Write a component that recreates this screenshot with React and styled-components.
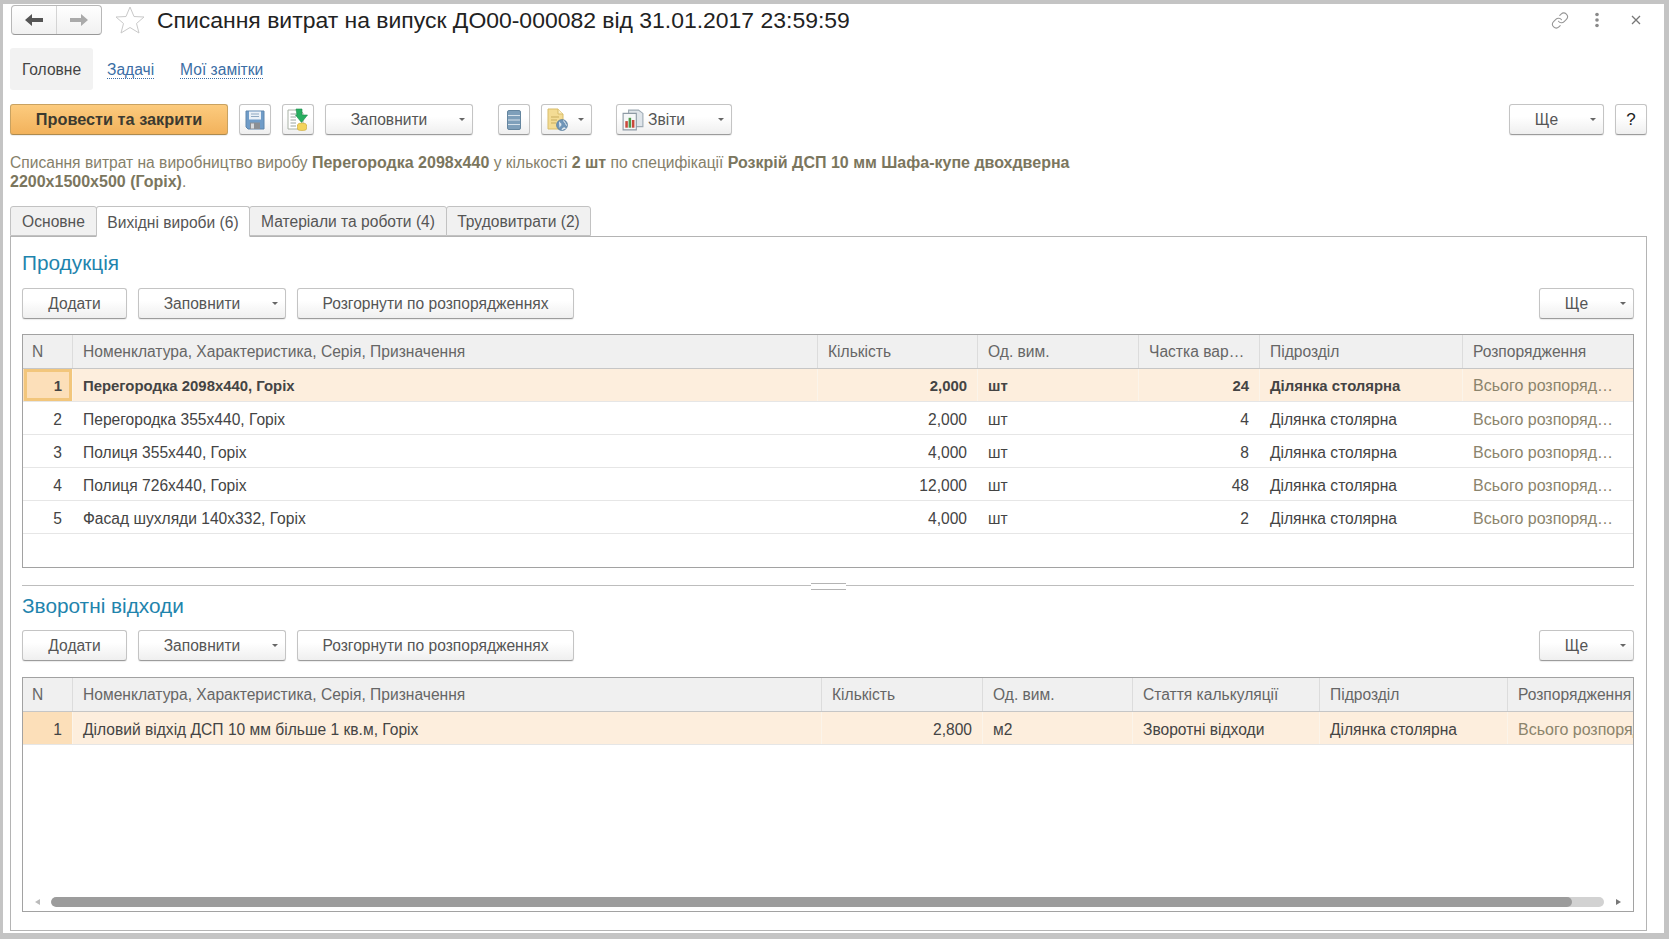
import React from "react";
import styled, { createGlobalStyle } from "styled-components";
import { Link } from "lucide-react";

const Global = createGlobalStyle`
  html, body { margin: 0; height: 100%; background: #c4c4c4; }
  #root { height: 100%; }
  * { box-sizing: border-box; }
  body { font-family: "Liberation Sans", Arial, sans-serif; font-size: 15.6px; color: #444; }
`;

const Page = styled.div`
  height: 939px;
  padding: 4px 5px 6px 3px;
`;

const Window = styled.div`
  height: 100%;
  background: #fff;
  padding: 1px 17px 2px 7px;
  display: flex;
  flex-direction: column;
`;

const Header = styled.header`
  display: flex;
  align-items: center;
  height: 30px;
`;

const NavGroup = styled.div`
  display: flex;
  margin-left: 1px;
  width: 91px;
  height: 30px;
  border: 1px solid #b8b8b8;
  border-bottom-color: #989898;
  border-radius: 4px;
  background: linear-gradient(#fff, #f1f1f1);
`;

const NavButton = styled.div`
  flex: 1;
  display: flex;
  align-items: center;
  justify-content: center;
  & + & { border-left: 1px solid #d4d4d4; }
`;

const Title = styled.h1`
  margin: 0 0 0 12px;
  font-size: 22.95px;
  font-weight: 400;
  color: #222;
  white-space: nowrap;
`;

const HeaderTools = styled.div`
  margin-left: auto;
  display: flex;
  align-items: center;
  color: #959595;
`;

const ToolSlot = styled.div`
  width: ${p => p.$w}px;
  display: flex;
  justify-content: center;
`;

const PageTabs = styled.nav`
  display: flex;
  align-items: center;
  height: 42px;
  margin-top: 13px;
`;

const PageTabActive = styled.div`
  width: 83px;
  height: 42px;
  padding-top: 2px;
  background: #f2f2f2;
  border-radius: 3px;
  display: flex;
  align-items: center;
  justify-content: center;
  color: #444;
`;

const PageLink = styled.a`
  margin: 2px 0 0 ${p => p.$ml}px;
  color: #3b6ea5;
  border-bottom: 1px dotted #3b6ea5;
  line-height: 17px;
`;

const Toolbar = styled.div`
  display: flex;
  align-items: center;
  gap: 11px;
  margin-top: ${p => p.$mt}px;
`;

const Button = styled.div`
  flex: none;
  display: flex;
  align-items: center;
  justify-content: center;
  width: ${p => p.$w}px;
  height: 31px;
  margin-left: ${p => p.$ml || 0}px;
  border: 1px solid #c4c4c4;
  border-bottom-color: #9c9c9c;
  border-radius: 3px;
  background: linear-gradient(#fff 40%, #efefef);
  box-shadow: 0 1px 1px rgba(0, 0, 0, 0.08);
  color: #555;
`;

const PrimaryButton = styled(Button)`
  border-color: #c9a261;
  border-bottom-color: #ad8a4f;
  background: linear-gradient(#fccb7e, #f2b25c);
  color: #3c3a30;
  font-size: 16.3px;
  font-weight: 700;
`;

const Label = styled.span`
  flex: 1;
  text-align: center;
`;

const HelpMark = styled.span`
  color: #222;
  font-size: 17px;
`;

const CaretBox = styled.span`
  flex: none;
  width: 20px;
  display: flex;
  justify-content: center;
  &::before {
    content: "";
    border-left: 3px solid transparent;
    border-right: 3px solid transparent;
    border-top: 3px solid #666;
  }
`;

const IconBox = styled.span`
  flex: none;
  display: flex;
  margin-left: ${p => p.$ml || 0}px;
`;

const Spacer = styled.div`
  flex: 1;
`;

const Description = styled.p`
  margin: 18px 0 0;
  line-height: 19px;
  font-size: 15.6px;
  color: #85806a;
  b { color: #7b765e; font-size: 16px; }
`;

const Tabs = styled.div`
  display: flex;
  margin-top: 15px;
  position: relative;
  z-index: 1;
`;

const Tab = styled.div`
  width: ${p => p.$w}px;
  height: ${p => p.$active ? 31 : 30}px;
  padding-top: 2px;
  display: flex;
  align-items: center;
  justify-content: center;
  margin-bottom: ${p => p.$active ? -1 : 0}px;
  margin-left: -1px;
  &:first-child { margin-left: 0; }
  border: 1px solid #c2c2c2;
  border-bottom-color: ${p => p.$active ? "#fff" : "#c2c2c2"};
  border-radius: 3px 3px 0 0;
  background: ${p => p.$active ? "#fff" : "#f1f1f1"};
  color: #555;
  position: relative;
  z-index: ${p => p.$active ? 1 : 0};
`;

const Panel = styled.section`
  flex: 1;
  border: 1px solid #b4b4b4;
  padding: 0 12px 18px 11px;
  display: flex;
  flex-direction: column;
  min-height: 0;
`;

const SectionTitle = styled.h2`
  margin: ${p => p.$mt}px 0 0;
  font-size: 20.8px;
  line-height: 24px;
  font-weight: 400;
  color: #1f84ad;
`;

const Grid = styled.div`
  margin-top: ${p => p.$mt}px;
  height: ${p => p.$h ? p.$h + "px" : "auto"};
  flex: ${p => p.$h ? "none" : 1};
  border: 1px solid #a2a2a2;
  display: flex;
  flex-direction: column;
  overflow: hidden;
`;

const GridRow = styled.div`
  display: grid;
  grid-template-columns: ${p => p.$cols};
  flex: none;
  height: ${p => p.$head ? 34 : 33}px;
  background: ${p => p.$head ? "#f0f0f0" : p.$selected ? "#fdeedd" : "#fff"};
  border-bottom: 1px solid ${p => p.$head ? "#c6c6c6" : "#e6e6e6"};
  color: ${p => p.$head ? "#666" : "#444"};
  font-weight: ${p => p.$bold ? 700 : 400};
  font-size: ${p => p.$bold ? 14.9 : 15.6}px;
  & > div { padding-top: ${p => p.$drop || 0}px; }
`;

const Cell = styled.div`
  display: flex;
  align-items: center;
  justify-content: ${p => p.$right ? "flex-end" : "flex-start"};
  padding: 0 ${p => p.$pr ?? 10}px 0 ${p => p.$pl ?? 10}px;
  min-width: 0;
  white-space: nowrap;
  overflow: hidden;
  color: ${p => p.$muted ? "#8b846c" : "inherit"};
  font-weight: ${p => p.$muted ? 400 : "inherit"};
  font-size: ${p => p.$muted ? "16px" : "inherit"};
  border-left: 1px solid ${p => p.$head ? "#dcdcdc" : p.$selected ? "#fbf4ea" : "transparent"};
  &:first-child { border-left-color: transparent; }
`;

const NumberCell = styled(Cell)`
  background: ${p => p.$selected ? "#fcdfb9" : "transparent"};
  box-shadow: ${p => p.$focus ? "inset 0 0 0 3px #f2c67c" : "none"};
`;

const ScrollRow = styled.div`
  margin-top: auto;
  height: 14px;
  flex: none;
  display: flex;
  align-items: flex-start;
  padding: 0 12px;
`;

const ScrollArrow = styled.span`
  flex: none;
  margin-top: 2px;
  border-top: 3px solid transparent;
  border-bottom: 3px solid transparent;
  border-${p => p.$dir === "left" ? "right" : "left"}: 5px solid ${p => p.$dir === "left" ? "#bbb" : "#777"};
`;

const ScrollTrack = styled.div`
  width: 1554px;
  height: 10px;
  margin-left: 11px;
  margin-right: 12px;
  background: #d2d2d2;
  border-radius: 5px;
  overflow: hidden;
`;

const ScrollThumb = styled.div`
  height: 100%;
  width: 1521px;
  background: #9c9c9c;
  border-radius: 5px;
`;

const Splitter = styled.div`
  margin-top: 17px;
  height: 1px;
  flex: none;
  background: #bdbdbd;
  position: relative;
  &::after {
    content: "";
    position: absolute;
    left: 789px;
    top: -2px;
    width: 35px;
    height: 5px;
    background: #fff;
    border-top: 1px solid #b4b4b4;
    border-bottom: 1px solid #b4b4b4;
  }
`;

const BackIcon = ({ color, flip }) => (
  <svg width="18" height="12" viewBox="0 0 18 12" style={flip ? { transform: "scaleX(-1)" } : undefined}>
    <path d="M0 6 L7 0 V4 H18 V8 H7 V12 Z" fill={color} />
  </svg>
);

const StarIcon = () => (
  <svg width="30" height="28" viewBox="0 0 30 28">
    <path d="M15 1 L19 10.5 L29 11 L21.5 17.5 L24 27 L15 21.5 L6 27 L8.5 17.5 L1 11 L11 10.5 Z" fill="#fff" stroke="#c9c9c9" strokeWidth="1" />
  </svg>
);

const KebabIcon = () => (
  <svg width="6" height="16" viewBox="0 0 6 16">
    <circle cx="3" cy="2.5" r="1.8" fill="#8a8a8a" />
    <circle cx="3" cy="8" r="1.8" fill="#8a8a8a" />
    <circle cx="3" cy="13.5" r="1.8" fill="#8a8a8a" />
  </svg>
);

const CloseIcon = () => (
  <svg width="10" height="10" viewBox="0 0 10 10">
    <path d="M1 1 L9 9 M9 1 L1 9" stroke="#777" strokeWidth="1.3" />
  </svg>
);

const SaveIcon = () => (
  <svg width="20" height="20" viewBox="0 0 20 20">
    <path d="M1 1 H19 V19 H3 L1 17 Z" fill="#6f9cc8" stroke="#5f86ad" />
    <rect x="4" y="1.5" width="12" height="8" fill="#e9f0f7" />
    <path d="M6 4 H14 M6 6.5 H14" stroke="#8fa9c2" />
    <rect x="5" y="12.5" width="10" height="6.5" fill="#8b8f94" />
    <rect x="6" y="13.5" width="3" height="5" fill="#d7dadd" />
  </svg>
);

const LoadIcon = () => (
  <svg width="22" height="24" viewBox="0 0 22 24">
    <path d="M1 2 H13 L16 5 V21 H1 Z" fill="#fff" stroke="#a9b2a6" />
    <path d="M3.5 6 H10 M3.5 9 H9 M3.5 12 H9 M3.5 15 H9 M3.5 18 H9" stroke="#9aa4a0" />
    <path d="M9 1 H15 V7 H20.5 L14.5 14.5 L8.5 7 H10 Z" fill="#27ae60" stroke="#1e8e4d" strokeWidth="0.6" />
    <ellipse cx="15" cy="17" rx="4.5" ry="2" fill="#f3d35c" stroke="#c9a637" strokeWidth="0.6" />
    <path d="M10.5 17 V21 C10.5 23 19.5 23 19.5 21 V17" fill="#f3d35c" stroke="#c9a637" strokeWidth="0.6" />
  </svg>
);

const StackIcon = () => (
  <svg width="14" height="20" viewBox="0 0 14 20">
    <rect x="0.5" y="0.5" width="13" height="19" rx="1.5" fill="#7e9fba" stroke="#64859f" />
    <path d="M1 5.5 H13 M1 10 H13 M1 14.5 H13" stroke="#d5e1ea" strokeWidth="1.2" />
  </svg>
);

const DocGlobeIcon = () => (
  <svg width="22" height="24" viewBox="0 0 22 24">
    <path d="M1 1 H11 L16 6 V21 H1 Z" fill="#f4dc94" stroke="#d9bd6a" />
    <path d="M11 1 V6 H16" fill="#fbeec4" stroke="#d9bd6a" />
    <path d="M4 9 H12 M4 12 H10 M4 15 H9" stroke="#c9ad5e" />
    <circle cx="15" cy="17" r="5.5" fill="#6f95b8" stroke="#4f7393" strokeWidth="0.6" />
    <path d="M12 14 C14 15 15 17 12.5 19 M16 12.5 C19 14 18 17 20 17.5 M15 22 C15 20 18 19 18.5 20.5" fill="#e8eef3" stroke="#e8eef3" strokeWidth="0.8" />
  </svg>
);

const ReportIcon = () => (
  <svg width="22" height="22" viewBox="0 0 20 20">
    <path d="M6 1 H15 L19 4 V16 H6 Z" fill="#dfe5ea" stroke="#9eaab4" />
    <path d="M1 4 H13 V19 H1 Z" fill="#f5f7f8" stroke="#8e9aa5" />
    <rect x="3" y="11" width="2.3" height="6" fill="#c9483b" />
    <rect x="6" y="8" width="2.3" height="9" fill="#4d9a4a" />
    <rect x="9" y="10" width="2.3" height="7" fill="#c9483b" />
  </svg>
);

const COLS_TOP = "49px 745px 160px 161px 121px 203px 1fr";
const COLS_BOTTOM = "49px 749px 161px 150px 187px 188px 1fr";

const topHead = ["N", "Номенклатура, Характеристика, Серія, Призначення", "Кількість", "Од. вим.", "Частка вар…", "Підрозділ", "Розпорядження"];
const bottomHead = ["N", "Номенклатура, Характеристика, Серія, Призначення", "Кількість", "Од. вим.", "Стаття калькуляції", "Підрозділ", "Розпорядження"];

const topRows = [
  ["1", "Перегородка 2098х440, Горіх", "2,000", "24"],
  ["2", "Перегородка 355х440, Горіх", "2,000", "4"],
  ["3", "Полиця 355х440, Горіх", "4,000", "8"],
  ["4", "Полиця 726х440, Горіх", "12,000", "48"],
  ["5", "Фасад шухляди 140х332, Горіх", "4,000", "2"],
];

const HeadRow = ({ cols, labels }) => (
  <GridRow $head $cols={cols}>
    {labels.map((label, i) => (
      <Cell key={label} $head $pl={i === 0 ? 8 : 10} $pr={i === 6 ? 0 : 10}>{label}</Cell>
    ))}
  </GridRow>
);

const ActionBar = ({ mt }) => (
  <Toolbar $mt={mt}>
    <Button $w={105}>Додати</Button>
    <Button $w={148}><Label>Заповнити</Label><CaretBox /></Button>
    <Button $w={277}>Розгорнути по розпорядженнях</Button>
    <Spacer />
    <Button $w={95}><Label>Ще</Label><CaretBox /></Button>
  </Toolbar>
);

export default function App() {
  return (
    <Page>
      <Global />
      <Window>
        <Header>
          <NavGroup>
            <NavButton><BackIcon color="#555" /></NavButton>
            <NavButton><BackIcon color="#aaa" flip /></NavButton>
          </NavGroup>
          <IconBox $ml={13}><StarIcon /></IconBox>
          <Title>Списання витрат на випуск ДО00-000082 від 31.01.2017 23:59:59</Title>
          <HeaderTools>
            <ToolSlot $w={18}><Link size={21} strokeWidth={1.4} /></ToolSlot>
            <ToolSlot $w={56}><KebabIcon /></ToolSlot>
            <ToolSlot $w={22}><CloseIcon /></ToolSlot>
          </HeaderTools>
        </Header>

        <PageTabs>
          <PageTabActive>Головне</PageTabActive>
          <PageLink $ml={14}>Задачі</PageLink>
          <PageLink $ml={26}>Мої замітки</PageLink>
        </PageTabs>

        <Toolbar $mt={14}>
          <PrimaryButton $w={218}>Провести та закрити</PrimaryButton>
          <Button $w={32}><SaveIcon /></Button>
          <Button $w={32}><LoadIcon /></Button>
          <Button $w={148}><Label>Заповнити</Label><CaretBox /></Button>
          <Button $w={32} $ml={14}><StackIcon /></Button>
          <Button $w={51}><IconBox $ml={5}><DocGlobeIcon /></IconBox><Spacer /><CaretBox /></Button>
          <Button $w={116} $ml={13}>
            <IconBox $ml={5}><ReportIcon /></IconBox>
            <IconBox $ml={4}>Звіти</IconBox>
            <Spacer />
            <CaretBox />
          </Button>
          <Spacer />
          <Button $w={95}><Label>Ще</Label><CaretBox /></Button>
          <Button $w={32}><HelpMark>?</HelpMark></Button>
        </Toolbar>

        <Description>
          Списання витрат на виробництво виробу <b>Перегородка 2098х440</b> у кількості <b>2 шт</b> по специфікації <b>Розкрій ДСП 10 мм Шафа-купе двохдверна</b>
          <br />
          <b>2200х1500х500 (Горіх)</b>.
        </Description>

        <Tabs>
          <Tab $w={87}>Основне</Tab>
          <Tab $w={154} $active>Вихідні вироби (6)</Tab>
          <Tab $w={198}>Матеріали та роботи (4)</Tab>
          <Tab $w={145}>Трудовитрати (2)</Tab>
        </Tabs>

        <Panel>
          <SectionTitle $mt={14}>Продукція</SectionTitle>
          <ActionBar mt={13} />
          <Grid $mt={15} $h={234}>
            <HeadRow cols={COLS_TOP} labels={topHead} />
            {topRows.map(([n, name, qty, share], i) => {
              const first = i === 0;
              return (
                <GridRow key={n} $cols={COLS_TOP} $selected={first} $bold={first} $drop={first ? 2 : 4}>
                  <NumberCell $right $selected={first} $focus={first}>{n}</NumberCell>
                  <Cell $selected={first}>{name}</Cell>
                  <Cell $right $selected={first}>{qty}</Cell>
                  <Cell $selected={first}>шт</Cell>
                  <Cell $right $selected={first}>{share}</Cell>
                  <Cell $selected={first}>Ділянка столярна</Cell>
                  <Cell $muted $selected={first}>Всього розпоряд…</Cell>
                </GridRow>
              );
            })}
          </Grid>

          <Splitter />

          <SectionTitle $mt={8}>Зворотні відходи</SectionTitle>
          <ActionBar mt={12} />
          <Grid $mt={16}>
            <HeadRow cols={COLS_BOTTOM} labels={bottomHead} />
            <GridRow $cols={COLS_BOTTOM} $selected $drop={4}>
              <NumberCell $right $selected>1</NumberCell>
              <Cell $selected>Діловий відхід ДСП 10 мм більше 1 кв.м, Горіх</Cell>
              <Cell $right $selected>2,800</Cell>
              <Cell $selected>м2</Cell>
              <Cell $selected>Зворотні відходи</Cell>
              <Cell $selected>Ділянка столярна</Cell>
              <Cell $muted $selected $pr={0}>Всього розпорядження</Cell>
            </GridRow>
            <ScrollRow>
              <ScrollArrow $dir="left" />
              <ScrollTrack><ScrollThumb /></ScrollTrack>
              <ScrollArrow $dir="right" />
            </ScrollRow>
          </Grid>
        </Panel>
      </Window>
    </Page>
  );
}
